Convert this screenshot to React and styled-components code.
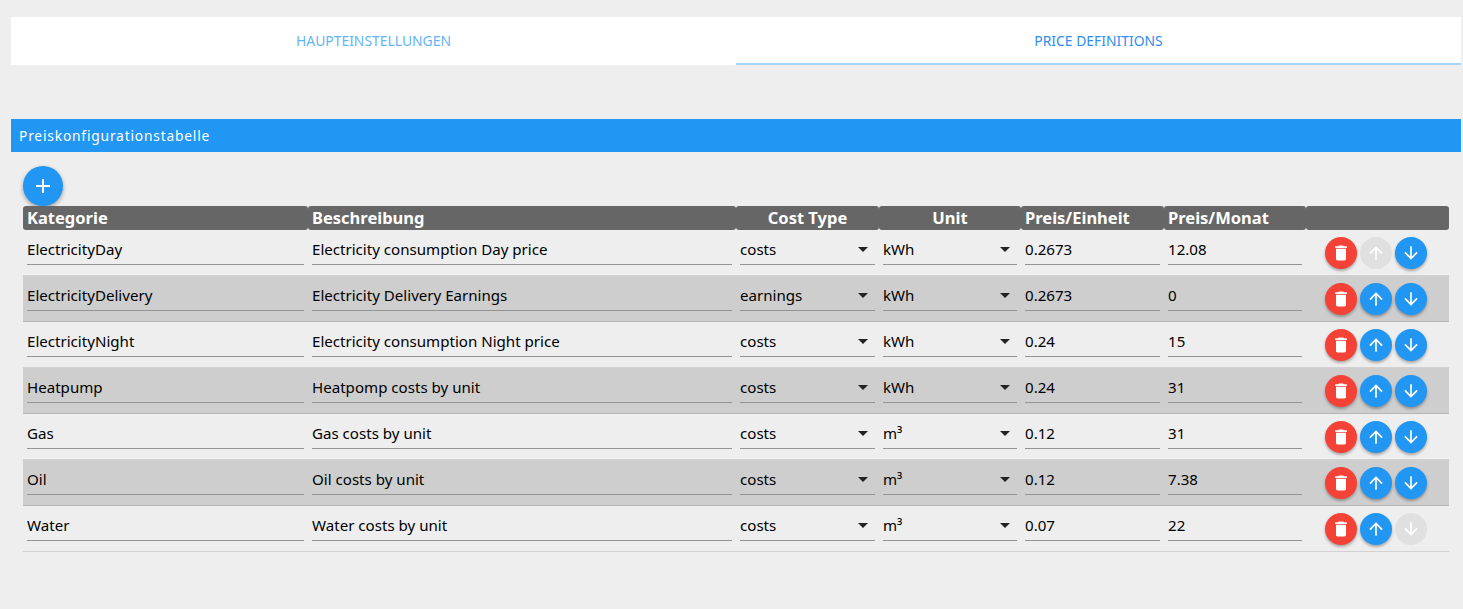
import * as React from "react";
import styled, { createGlobalStyle } from "styled-components";

const GlobalStyle = createGlobalStyle`
  html, body {
    margin: 0;
    padding: 0;
    background: #eeeeee;
    font-family: "Noto Sans", "Open Sans", sans-serif;
  }
`;

const COLUMNS = "285px 428px 143px 142px 143px 142px 143px";

const Page = styled.div`
  width: 1463px;
  height: 609px;
  padding: 17px 2px 0 11px;
  box-sizing: border-box;
  overflow: hidden;
`;

const Tabs = styled.div`
  display: flex;
  height: 48px;
  background: #fff;
`;

const Tab = styled.div`
  flex: 1;
  display: flex;
  align-items: center;
  justify-content: center;
  box-sizing: border-box;
  font-size: 13.9px;
  color: ${({ $active }) => ($active ? "#2f8df0" : "#64b5f6")};
  border-bottom: 2px solid ${({ $active }) => ($active ? "#a6d4fa" : "transparent")};
`;

const TitleBar = styled.div`
  margin-top: 54px;
  height: 33px;
  padding-left: 8px;
  display: flex;
  align-items: center;
  background: #2196f3;
  color: #fff;
  font-size: 13.8px;
  letter-spacing: 0.8px;
`;

const TableArea = styled.div`
  padding: 14px 12px 0 12px;
`;

const Fab = styled.button`
  width: 40px;
  height: 40px;
  padding: 0;
  border: 0;
  border-radius: 50%;
  display: flex;
  align-items: center;
  justify-content: center;
  background: #2196f3;
  box-shadow: 0 2px 4px rgba(0, 0, 0, 0.35);
`;

const HeaderRow = styled.div`
  display: grid;
  grid-template-columns: ${COLUMNS};
  height: 24px;
`;

const HeaderCell = styled.div`
  background: #666;
  border-radius: 3px;
  color: #fff;
  font-size: 16.5px;
  font-weight: 700;
  line-height: 24px;
  padding: 0 4px;
  white-space: nowrap;
  text-align: ${({ $center }) => ($center ? "center" : "left")};
`;

const Row = styled.div`
  display: grid;
  grid-template-columns: ${COLUMNS};
  height: 46px;
  box-sizing: border-box;
  border-bottom: 1px solid ${({ $odd }) => ($odd ? "#b5b5b5" : "#d2d2d2")};
  background: ${({ $odd }) => ($odd ? "#cecece" : "transparent")};
`;

const Cell = styled.div`
  padding: 0 4px;
  position: relative;
`;

const TextField = styled.input`
  display: block;
  width: 100%;
  height: 35px;
  box-sizing: border-box;
  padding: 9px 0 5px;
  margin: 0;
  background: transparent;
  border: 0;
  border-bottom: 1px solid #949494;
  outline: none;
  color: #000;
  font: 15.1px "Noto Sans", "Open Sans", sans-serif;
`;

const SelectField = styled.select`
  display: block;
  width: 100%;
  height: 35px;
  box-sizing: border-box;
  padding: 9px 0 5px;
  margin: 0;
  appearance: none;
  background: transparent;
  border: 0;
  border-radius: 0;
  border-bottom: 1px solid #949494;
  outline: none;
  color: #000;
  font: 15.1px "Noto Sans", "Open Sans", sans-serif;
`;

const Caret = styled.svg`
  position: absolute;
  right: 4px;
  top: 7px;
  width: 24px;
  height: 24px;
  fill: #222;
  pointer-events: none;
`;

const Actions = styled.div`
  display: flex;
  align-items: flex-start;
  gap: 3.2px;
  padding: 7px 0 0 19px;
`;

const ActionButton = styled.button`
  width: 32px;
  height: 32px;
  flex: none;
  padding: 0;
  border: 0;
  border-radius: 50%;
  display: flex;
  align-items: center;
  justify-content: center;
  background: ${({ $color }) => $color};
  box-shadow: ${({ $disabled }) => ($disabled ? "none" : "0 2px 3px rgba(0, 0, 0, 0.3)")};
`;

const Icon = styled.svg`
  width: ${({ $size }) => $size}px;
  height: ${({ $size }) => $size}px;
  fill: #fff;
`;

const PATHS = {
  plus: "M19 13h-6v6h-2v-6H5v-2h6V5h2v6h6v2z",
  trash: "M6 19c0 1.1.9 2 2 2h8c1.1 0 2-.9 2-2V7H6v12zM19 4h-3.5l-1-1h-5l-1 1H5v2h14V4z",
  up: "M4 12l1.41 1.41L11 7.83V20h2V7.83l5.58 5.59L20 12l-8-8-8 8z",
  down: "M20 12l-1.41-1.41L13 16.17V4h-2v12.17l-5.58-5.59L4 12l8 8 8-8z",
};

const rows = [
  ["ElectricityDay", "Electricity consumption Day price", "costs", "kWh", "0.2673", "12.08"],
  ["ElectricityDelivery", "Electricity Delivery Earnings", "earnings", "kWh", "0.2673", "0"],
  ["ElectricityNight", "Electricity consumption Night price", "costs", "kWh", "0.24", "15"],
  ["Heatpump", "Heatpomp costs by unit", "costs", "kWh", "0.24", "31"],
  ["Gas", "Gas costs by unit", "costs", "m³", "0.12", "31"],
  ["Oil", "Oil costs by unit", "costs", "m³", "0.12", "7.38"],
  ["Water", "Water costs by unit", "costs", "m³", "0.07", "22"],
];

function SvgIcon({ name, size = 20 }) {
  return (
    <Icon $size={size} viewBox="0 0 24 24">
      <path d={PATHS[name]} />
    </Icon>
  );
}

function Select({ value, options }) {
  return (
    <Cell>
      <SelectField defaultValue={value}>
        {options.map((o) => (
          <option key={o}>{o}</option>
        ))}
      </SelectField>
      <Caret viewBox="0 0 24 24">
        <path d="M7 10l5 5 5-5z" />
      </Caret>
    </Cell>
  );
}

function Field({ value }) {
  return (
    <Cell>
      <TextField defaultValue={value} />
    </Cell>
  );
}

export default function App() {
  return (
    <Page>
      <GlobalStyle />
      <Tabs>
        <Tab>HAUPTEINSTELLUNGEN</Tab>
        <Tab $active>PRICE DEFINITIONS</Tab>
      </Tabs>
      <TitleBar>Preiskonfigurationstabelle</TitleBar>
      <TableArea>
        <Fab>
          <SvgIcon name="plus" size={24} />
        </Fab>
        <HeaderRow>
          <HeaderCell>Kategorie</HeaderCell>
          <HeaderCell>Beschreibung</HeaderCell>
          <HeaderCell $center>Cost Type</HeaderCell>
          <HeaderCell $center>Unit</HeaderCell>
          <HeaderCell>Preis/Einheit</HeaderCell>
          <HeaderCell>Preis/Monat</HeaderCell>
          <HeaderCell />
        </HeaderRow>
        {rows.map((r, i) => {
          const first = i === 0;
          const last = i === rows.length - 1;
          return (
            <Row key={r[0]} $odd={i % 2 === 1}>
              <Field value={r[0]} />
              <Field value={r[1]} />
              <Select value={r[2]} options={["costs", "earnings"]} />
              <Select value={r[3]} options={["kWh", "m³"]} />
              <Field value={r[4]} />
              <Field value={r[5]} />
              <Actions>
                <ActionButton $color="#f44336">
                  <SvgIcon name="trash" />
                </ActionButton>
                <ActionButton $color={first ? "#e0e0e0" : "#2196f3"} $disabled={first}>
                  <SvgIcon name="up" />
                </ActionButton>
                <ActionButton $color={last ? "#e0e0e0" : "#2196f3"} $disabled={last}>
                  <SvgIcon name="down" />
                </ActionButton>
              </Actions>
            </Row>
          );
        })}
      </TableArea>
    </Page>
  );
}
